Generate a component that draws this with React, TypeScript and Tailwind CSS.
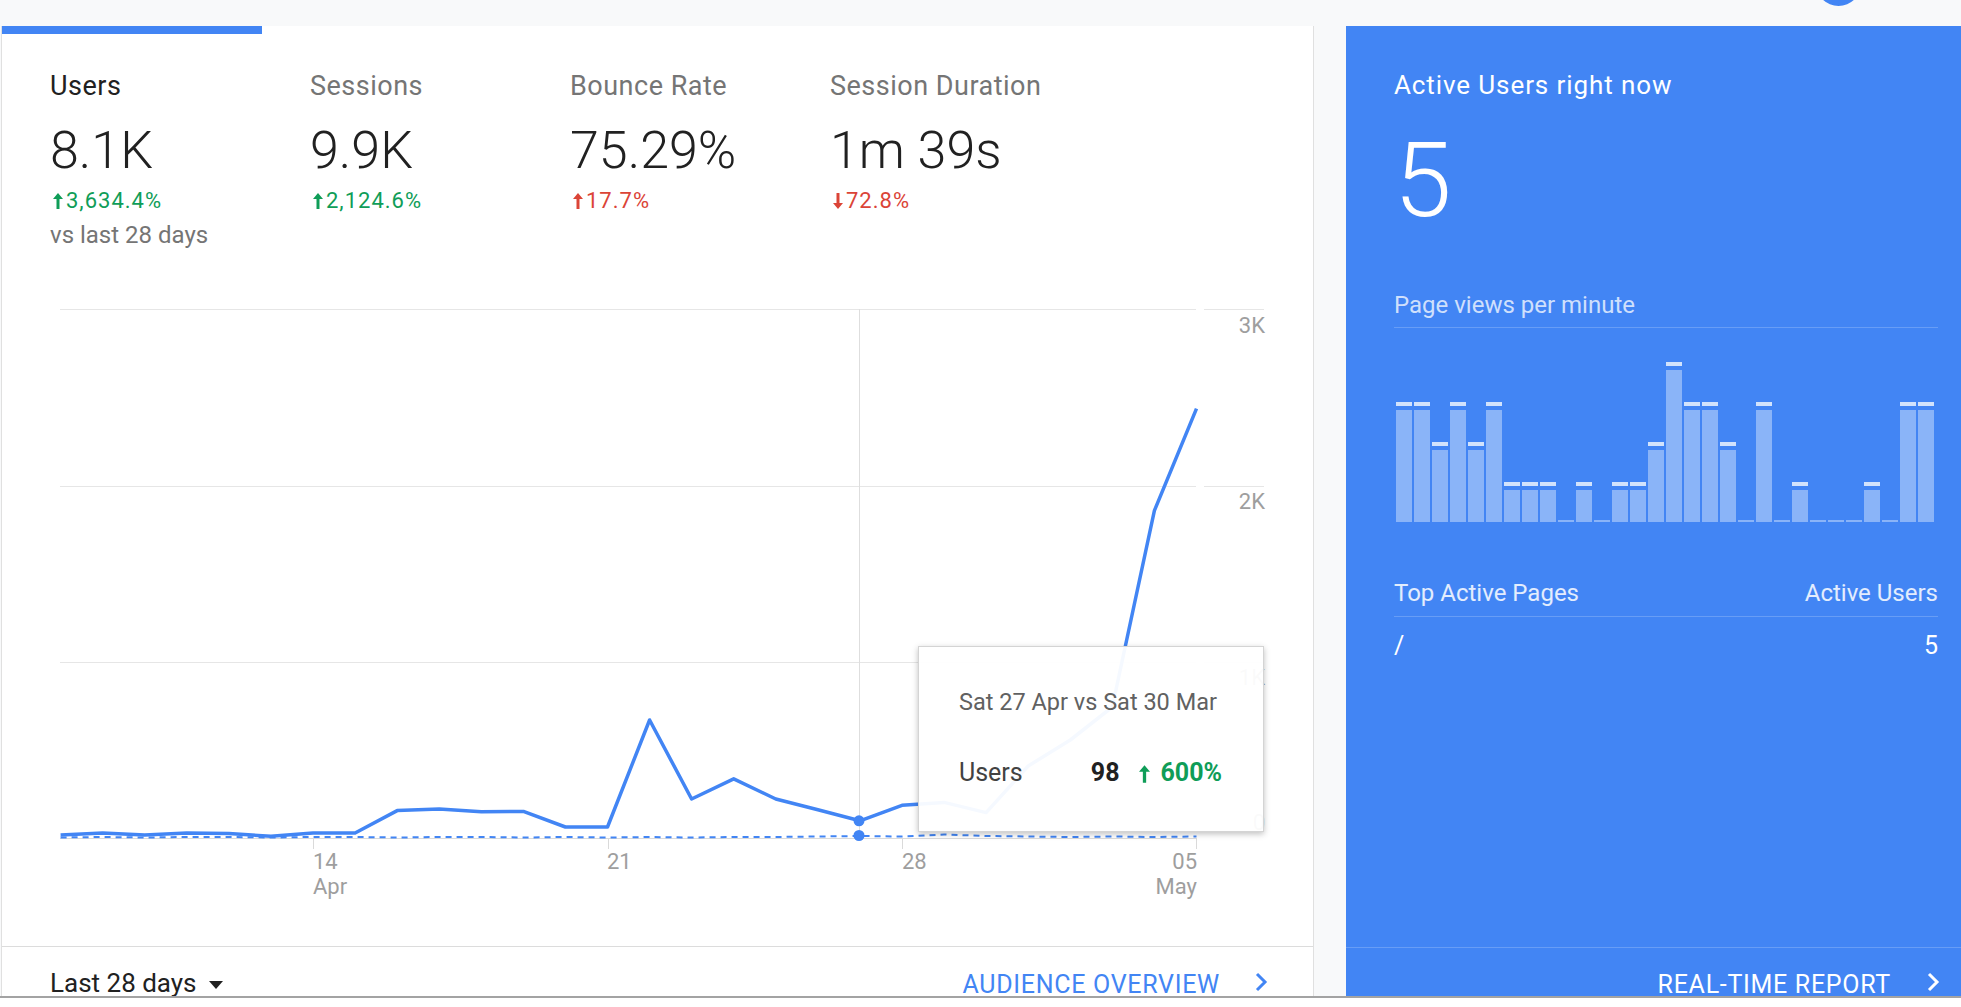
import React from 'react'

type Metric = {
  label: string
  value: string
  change: string
  up: boolean
  good: boolean
  active?: boolean
}

const metrics: Metric[] = [
  { label: 'Users', value: '8.1K', change: '3,634.4%', up: true, good: true, active: true },
  { label: 'Sessions', value: '9.9K', change: '2,124.6%', up: true, good: true },
  { label: 'Bounce Rate', value: '75.29%', change: '17.7%', up: true, good: false },
  { label: 'Session Duration', value: '1m 39s', change: '72.8%', up: false, good: false },
]

// users per day, already in page y coords
const current = [
  835, 833, 835, 833, 833.5, 836.3, 833, 833, 810.6, 809, 811.8, 811.4, 827, 827, 720, 799, 778.8, 799,
  809.8, 820.8, 805.3, 802.4, 812.6, 766, 740, 707, 510.6, 408.6,
]
const previous = [
  837.5, 837, 837.5, 837, 837, 837.5, 837, 837, 837.5, 837, 837, 837.5, 837, 837.5, 837, 837.5, 837, 837,
  836.5, 836, 836.5, 834.5, 836, 836.5, 837, 836.5, 837, 836.5,
]
const X0 = 60.6
const DX = 42.07

// page views per minute (units of 40px)
const pageViews = [3, 3, 2, 3, 2, 3, 1, 1, 1, 0, 1, 0, 1, 1, 2, 4, 3, 3, 2, 0, 3, 0, 1, 0, 0, 0, 1, 0, 3, 3]

function Arrow({ up, className }: { up: boolean; className: string }) {
  return (
    <svg viewBox="0 0 10 16" className={className} fill="currentColor">
      {up ? (
        <polygon points="5,0 10,6 6.5,6 6.5,16 3.5,16 3.5,6 0,6" />
      ) : (
        <polygon points="5,16 10,10 6.5,10 6.5,0 3.5,0 3.5,10 0,10" />
      )}
    </svg>
  )
}

function Chevron({ className }: { className: string }) {
  return (
    <svg viewBox="0 0 15 20" className={className} fill="none" stroke="currentColor" strokeWidth="3">
      <polyline points="3,2 11,10 3,18" />
    </svg>
  )
}

function MetricTab({ m }: { m: Metric }) {
  const tone = m.good ? 'text-[#0f9d58]' : 'text-[#db4437]'
  return (
    <div className="w-[260px] shrink-0">
      <div className={`h-[8px] ${m.active ? 'bg-[#4285f4]' : ''}`} />
      <div className="pl-[48px]">
        <div
          className={`mt-[39px] text-[27px] leading-none tracking-[0.5px] ${m.active ? 'text-[#212121]' : 'text-[#757575]'}`}
        >
          {m.label}
        </div>
        <div className="mt-[25px] text-[52px] font-light leading-none text-[#212121]">{m.value}</div>
        <div className={`mt-[13px] flex items-end text-[22px] leading-none tracking-[1px] ${tone}`}>
          <Arrow up={m.up} className="mb-[3px] ml-[3px] h-[16px] w-[10px]" />
          <span className="ml-[3px]">{m.change}</span>
        </div>
        {m.active && <div className="mt-[11px] text-[24px] leading-none text-[#757575]">vs last 28 days</div>}
      </div>
    </div>
  )
}

function Chart() {
  const pts = (ys: number[]) => ys.map((y, i) => `${(X0 + i * DX).toFixed(1)},${y}`).join(' ')
  const ticks = [313, 608, 902, 1196]
  return (
    <div className="relative h-[686px]">
      <svg width="1311" height="686" className="block">
        <g transform="translate(-2,-260)">
          {[309.5, 486.5, 662.5].map((y) => (
            <g key={y} stroke="#e6e6e6" strokeWidth="1">
              <line x1={60} x2={1196} y1={y} y2={y} />
              <line x1={1204} x2={1264} y1={y} y2={y} />
            </g>
          ))}
          <line x1={859.5} x2={859.5} y1={309} y2={838} stroke="#dedede" />
          <line x1={60} x2={1197} y1={838.5} y2={838.5} stroke="#dadada" />
          {ticks.map((x) => (
            <line key={x} x1={x + 0.5} x2={x + 0.5} y1={838} y2={849} stroke="#dadada" />
          ))}
          <g fill="#9e9e9e" fontSize="22">
            <text x={1265} y={333} textAnchor="end">3K</text>
            <text x={1265} y={509} textAnchor="end">2K</text>
            <text x={1265} y={685} textAnchor="end">1K</text>
            <text x={1265} y={830} textAnchor="end">0</text>
            <text x={313} y={869}>14</text>
            <text x={313} y={894}>Apr</text>
            <text x={607} y={869}>21</text>
            <text x={902} y={869}>28</text>
            <text x={1197} y={869} textAnchor="end">05</text>
            <text x={1197} y={894} textAnchor="end">May</text>
          </g>
          <polyline
            points={pts(previous)}
            fill="none"
            stroke="#4285f4"
            strokeWidth="2"
            strokeDasharray="6 5"
          />
          <polyline points={pts(current)} fill="none" stroke="#4285f4" strokeWidth="3.5" strokeLinejoin="round" />
          <circle cx={859} cy={820.8} r={5.5} fill="#4285f4" />
          <circle cx={859} cy={835.5} r={5.5} fill="#4285f4" />
        </g>
      </svg>

      <div className="absolute left-[916px] top-[386px] h-[186px] w-[346px] border border-[#d4d4d4] bg-white/95 pl-[40px] pr-[41px] shadow-[0_2px_6px_rgba(0,0,0,0.25)]">
        <div className="mt-[44px] whitespace-nowrap text-[23.5px] leading-none text-[#616161]">
          Sat 27 Apr vs Sat 30 Mar
        </div>
        <div className="mt-[45px] flex items-end justify-between text-[25px] leading-none">
          <span className="text-[#424242]">Users</span>
          <span className="flex items-end font-bold">
            <span className="text-[#212121]">98</span>
            <Arrow up className="mb-[2px] ml-[20px] h-[18px] w-[11px] text-[#0f9d58]" />
            <span className="ml-[10px] text-[#0f9d58]">600%</span>
          </span>
        </div>
      </div>
    </div>
  )
}

function Bar({ level }: { level: number }) {
  if (level === 0) return <div className="h-[2px] w-[16px] bg-[#8ab4f8]" />
  return (
    <div className="flex w-[16px] flex-col">
      <div className="h-[4px] bg-[#d2e3fc]" />
      <div className="mt-[4px] bg-[#8ab4f8]" style={{ height: level * 40 - 8 }} />
    </div>
  )
}

export default function App() {
  return (
    <div className="relative h-[1007px] w-[1961px] overflow-hidden bg-white font-['Roboto',sans-serif]">
      <div className="relative h-[996px] overflow-hidden bg-[#f8f9fa]">
        <div className="absolute left-[1816px] top-[-39px] h-[45px] w-[45px] rounded-full bg-[#4285f4]" />

        <div className="flex gap-[32px] pl-[1px] pt-[26px]">
          {/* audience card */}
          <div className="h-[1000px] w-[1313px] shrink-0 border-x border-[#e0e0e0] bg-white">
            <div className="flex h-[234px]">
              {metrics.map((m) => (
                <MetricTab key={m.label} m={m} />
              ))}
            </div>

            <Chart />

            <div className="border-t border-[#dcdcdc]">
              <div className="mt-[23px] flex items-start justify-between pl-[48px] pr-[44px] leading-none">
                <div className="flex items-center text-[26px] text-[#212121]">
                  <span>Last 28 days</span>
                  <svg viewBox="0 0 14 8" className="ml-[12px] mt-[4px] h-[8px] w-[14px]" fill="#212121">
                    <polygon points="0,0 14,0 7,8" />
                  </svg>
                </div>
                <div className="mt-[2px] flex items-start text-[25px] tracking-[0.7px] text-[#4285f4]">
                  <span>AUDIENCE OVERVIEW</span>
                  <Chevron className="ml-[34px] h-[20px] w-[15px]" />
                </div>
              </div>
            </div>
          </div>

          {/* realtime card */}
          <div className="h-[1000px] w-[640px] shrink-0 bg-[#4285f4] text-white">
            <div className="px-[48px] pt-[46px]">
              <div className="text-[26px] leading-none tracking-[0.9px]">Active Users right now</div>
              <div className="mt-[31px] text-[104px] font-light leading-none">5</div>
              <div className="mt-[60px] text-[24px] leading-none text-white/75">Page views per minute</div>
              <div className="mt-[10px] h-px bg-white/20" />
              <div className="ml-[2px] flex h-[194px] items-end gap-[2px]">
                {pageViews.map((v, i) => (
                  <Bar key={i} level={v} />
                ))}
              </div>
              <div className="mt-[59px] flex justify-between text-[24px] leading-none text-white/85">
                <span>Top Active Pages</span>
                <span>Active Users</span>
              </div>
              <div className="mt-[11px] h-px bg-white/20" />
              <div className="mt-[16px] flex justify-between text-[25px] leading-none">
                <span>/</span>
                <span>5</span>
              </div>
            </div>
            <div className="mt-[289px] border-t border-white/20">
              <div className="mt-[24px] flex items-start justify-end pr-[45px] text-[25px] leading-none tracking-[0.7px]">
                <span>REAL-TIME REPORT</span>
                <Chevron className="ml-[35px] h-[20px] w-[15px]" />
              </div>
            </div>
          </div>
        </div>
      </div>
      <div className="h-[2px] bg-[#a3a3a3]" />
    </div>
  )
}
